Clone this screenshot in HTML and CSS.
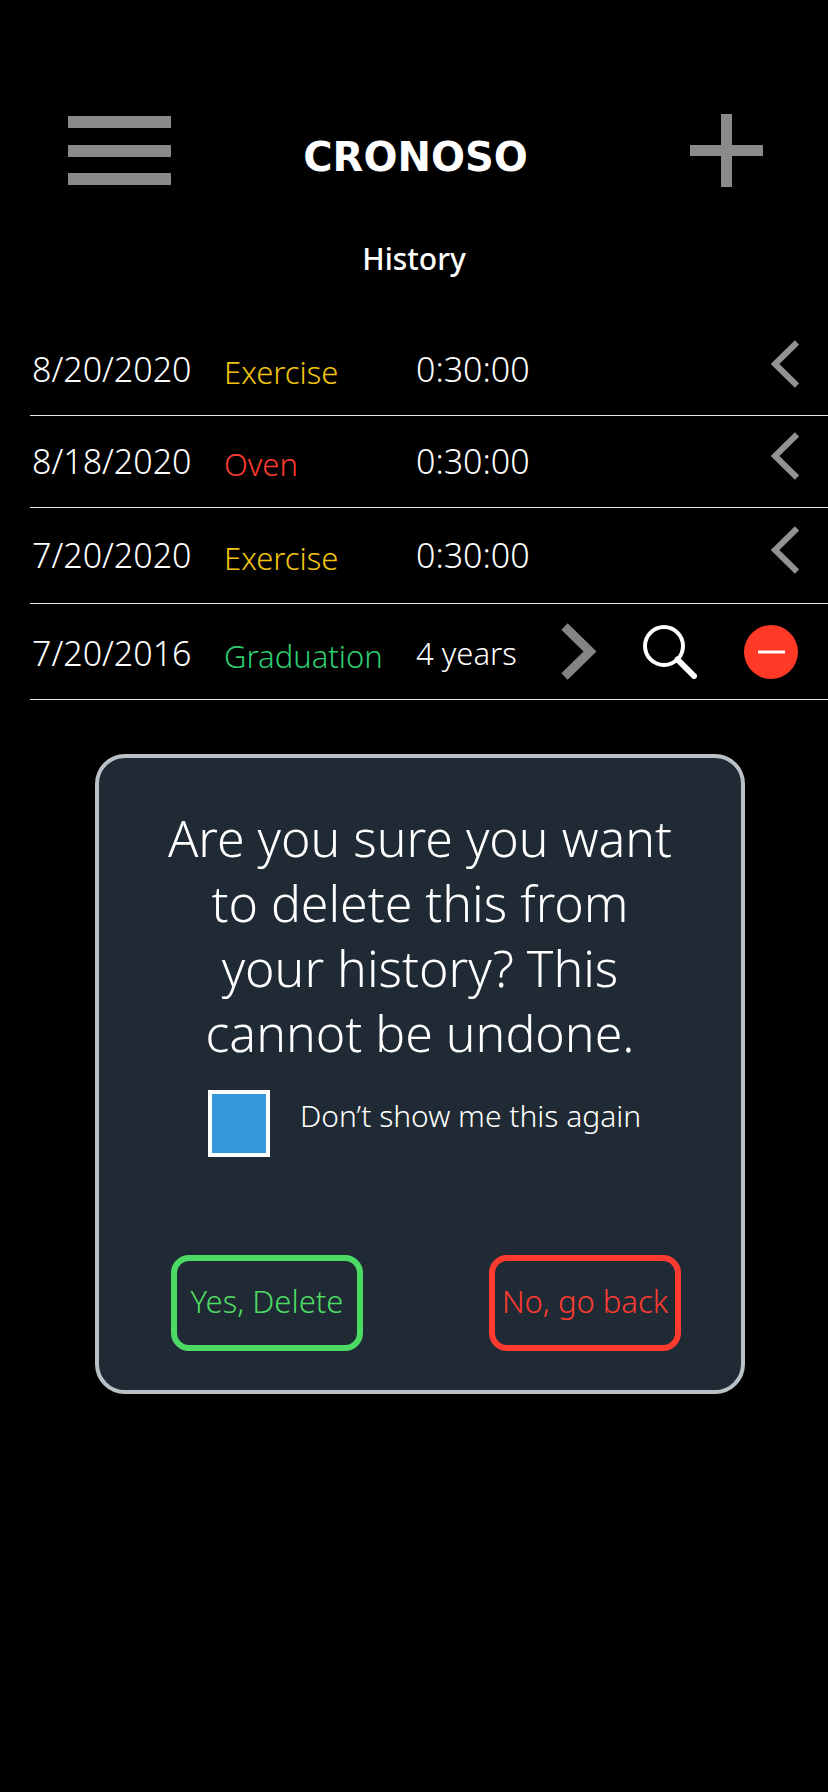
FILE: index.html
```html
<!DOCTYPE html>
<html lang="en">
<head>
<meta charset="utf-8">
<meta name="viewport" content="width=device-width, initial-scale=1">
<title>Cronoso – History</title>
<link rel="stylesheet" href="styles.css">
</head>
<body>
<header class="topbar">
  <button class="icon-button" type="button" aria-label="Menu">
    <svg width="103" height="70" viewBox="0 0 103 70"><path d="M0 0h103v12H0zM0 29h103v12H0zM0 57h103v12H0z" fill="#8a8a8a"/></svg>
  </button>
  <h1 class="brand">CRONOSO</h1>
  <button class="icon-button" type="button" aria-label="Add">
    <svg width="73" height="73" viewBox="0 0 73 73"><path d="M31 0h11v31h31v11H42v31H31V42H0V31h31z" fill="#8a8a8a"/></svg>
  </button>
</header>

<main>
  <h2 class="page-title">History</h2>

  <table class="history">
    <tbody>
      <tr class="entry">
        <td class="date">8/20/2020</td>
        <td class="name yellow">Exercise</td>
        <td class="time">0:30:00</td>
        <td class="actions"><button class="icon-button" type="button" aria-label="Show actions"><svg width="28" height="48" viewBox="0 0 28 48"><path d="M26 2.500L4 24l22 21.500" fill="none" stroke="#929292" stroke-width="6"/></svg></button></td>
      </tr>
      <tr class="entry">
        <td class="date">8/18/2020</td>
        <td class="name red">Oven</td>
        <td class="time">0:30:00</td>
        <td class="actions"><button class="icon-button" type="button" aria-label="Show actions"><svg width="28" height="48" viewBox="0 0 28 48"><path d="M26 2.500L4 24l22 21.500" fill="none" stroke="#929292" stroke-width="6"/></svg></button></td>
      </tr>
      <tr class="entry roomy">
        <td class="date">7/20/2020</td>
        <td class="name yellow">Exercise</td>
        <td class="time">0:30:00</td>
        <td class="actions"><button class="icon-button" type="button" aria-label="Show actions"><svg width="28" height="48" viewBox="0 0 28 48"><path d="M26 2.500L4 24l22 21.500" fill="none" stroke="#929292" stroke-width="6"/></svg></button></td>
      </tr>
      <tr class="entry roomy open">
        <td class="date">7/20/2016</td>
        <td class="name green">Graduation</td>
        <td class="time words">4 years</td>
        <td class="actions">
          <div class="action-list">
            <button class="icon-button" type="button" aria-label="Hide actions"><svg width="35" height="57" viewBox="0 0 35 57"><path d="M3.500 3.500L29 28.500l-25.500 25" fill="none" stroke="#828584" stroke-width="9"/></svg></button>
            <button class="icon-button" type="button" aria-label="View"><svg width="54" height="54" viewBox="0 0 54 54"><circle cx="21" cy="21" r="19" fill="none" stroke="#fff" stroke-width="4"/><path d="M34.500 34.500L51 51" fill="none" stroke="#fff" stroke-width="6" stroke-linecap="round"/></svg></button>
            <button class="icon-button" type="button" aria-label="Delete"><svg width="54" height="54" viewBox="0 0 54 54"><circle cx="27" cy="27" r="27" fill="#ff3926"/><path d="M14 27h27" stroke="#fff" stroke-width="3"/></svg></button>
          </div>
        </td>
      </tr>
    </tbody>
  </table>

  <section class="dialog" role="alertdialog" aria-labelledby="question">
    <p class="question" id="question">Are you sure you want to delete this from your history? This cannot be undone.</p>
    <div class="remember">
      <input class="tick" type="checkbox" id="remember">
      <label class="tick-label" for="remember">Don’t show me this again</label>
    </div>
    <div class="choices">
      <button class="choice yes" type="button">Yes, Delete</button>
      <button class="choice no" type="button">No, go back</button>
    </div>
  </section>
</main>
</body>
</html>
```
FILE: styles.css
```css
* { box-sizing: border-box; }

body {
  margin: 0;
  min-height: 100vh;
  background: #000;
  color: #fff;
  font-family: "Noto Sans", "Open Sans", sans-serif;
  font-size: 31px;
  font-weight: 350;
  line-height: 40px;
}

svg { display: block; }

.icon-button {
  padding: 0;
  border: 0;
  background: none;
  cursor: pointer;
}

.topbar {
  display: grid;
  grid-template-columns: 103px 1fr 103px;
  align-items: center;
  padding: 114px 65px 0 68px;
}

.topbar .icon-button:last-child { justify-self: end; }

.brand {
  margin: 0;
  padding-top: 12px;
  font-family: "DejaVu Sans", sans-serif;
  font-size: 40px;
  font-weight: 700;
  line-height: 48px;
  text-align: center;
}

.page-title {
  margin: 52px 0 0;
  font-size: 30px;
  font-weight: 500;
  text-align: center;
}

.history {
  width: calc(100% - 30px);
  margin: 44px 0 0 30px;
  border-collapse: collapse;
  table-layout: fixed;
}

.entry { height: 92px; border-bottom: 1px solid #e4e4e4; }
.roomy { height: 96px; }
.entry td { padding: 0; white-space: nowrap; }

.date { width: 194px; }
.entry .date { padding-left: 2px; }
.name { width: 192px; }
.entry .name { padding-top: 6px; }
.time { width: 145px; }
.date, .time { font-size: 34px; }
.words { font-size: 31px; }
.entry .actions { padding: 0 29px 10px 0; }
.entry.open td { padding-top: 4px; }
.entry.open .name { padding-top: 10px; }
.entry.open .actions { padding: 1px 30px 0 0; }
.actions > .icon-button { display: block; margin-left: auto; }
.action-list { display: flex; align-items: center; justify-content: space-between; }

.yellow { color: #f1c40f; }
.red { color: #ff3b30; }
.green { color: #2ecc71; }

.dialog {
  margin: 54px 83px 0 95px;
  padding: 48px 60px 39px;
  border: 4px solid #b9c1c6;
  border-radius: 30px;
  background: #202a34;
}

.question {
  margin: 0;
  font-size: 50px;
  line-height: 65px;
  text-align: center;
}

.remember {
  display: flex;
  gap: 30px;
  margin: 24px 0 98px 49px;
}

.tick {
  appearance: none;
  width: 62px;
  height: 67px;
  margin: 0;
  border: 4px solid #fff;
  background: #3498db;
}

.tick-label { padding-top: 6px; font-size: 30px; font-weight: 300; }

.choices { display: flex; justify-content: space-between; padding-left: 12px; }

.choice {
  width: 192px;
  height: 96px;
  padding: 0 0 4px;
  border: 6px solid;
  border-radius: 18px;
  background: none;
  font: inherit;
  white-space: nowrap;
}

.yes { color: #4cd964; }
.no { color: #ff3b30; }
```
